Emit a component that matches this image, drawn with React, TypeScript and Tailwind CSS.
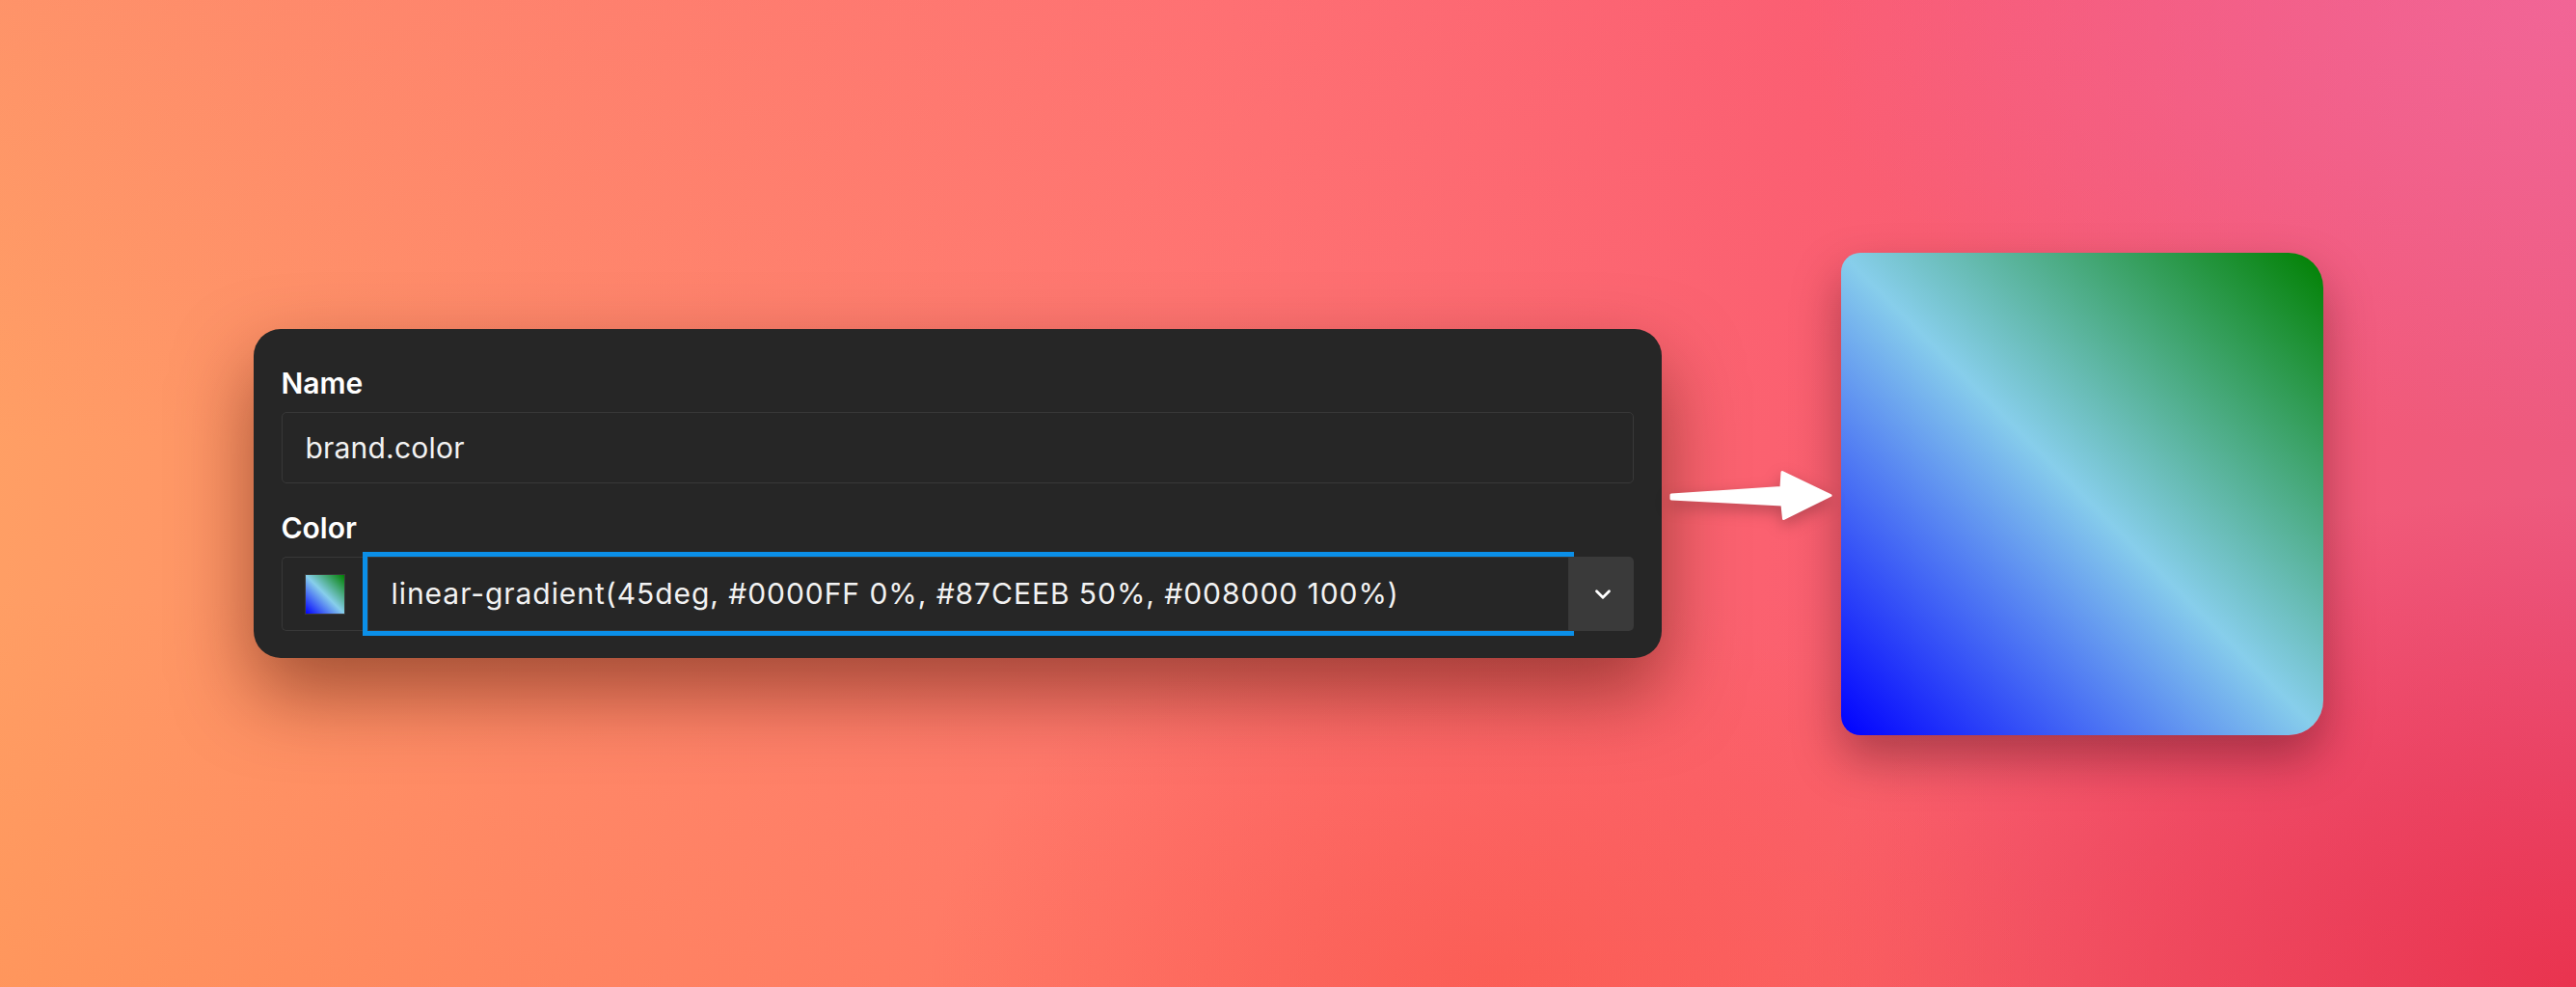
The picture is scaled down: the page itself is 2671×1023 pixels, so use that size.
import { ChevronDown } from "lucide-react"

function Arrow() {
  return (
    <svg
      width="186"
      height="65"
      viewBox="0 0 186 65"
      className="shrink-0 drop-shadow-[0_6px_8px_rgba(0,0,0,0.25)]"
    >
      <path
        d="M10 34 L124 26.5 L125 10.5 L175 34.5 L126.5 58.5 L125 44 L10 38 Z"
        fill="#ffffff"
        stroke="#ffffff"
        strokeWidth="3"
        strokeLinejoin="round"
      />
    </svg>
  )
}

function Field({ label, children }: { label: string; children: React.ReactNode }) {
  return (
    <div className="flex flex-col gap-3">
      <label className="text-[30px] leading-[36px] font-semibold text-white">{label}</label>
      {children}
    </div>
  )
}

export default function App() {
  return (
    <div className="w-full h-[1023px] flex items-center justify-center font-['Inter','Liberation_Sans',sans-serif] bg-[linear-gradient(180deg,rgba(250,80,130,0.16)_0%,rgba(250,80,130,0)_45%,rgba(255,110,40,0)_60%,rgba(255,110,40,0.14)_100%),radial-gradient(ellipse_22%_40%_at_58%_100%,rgba(250,85,85,0.7)_0%,rgba(250,85,85,0)_100%),radial-gradient(ellipse_30%_45%_at_100%_0%,#f0699a_0%,transparent_100%),radial-gradient(ellipse_30%_50%_at_100%_100%,#e62a55_0%,transparent_100%),linear-gradient(95deg,#ffa064_0%,#ff8a6a_22%,#ff7770_45%,#fb6170_68%,#f45a74_85%,#ec5a80_100%)]">
      <div className="w-[1460px] shrink-0 rounded-[28px] bg-[#262626] pt-[38px] pb-[28px] px-[29px] flex flex-col gap-[28px] shadow-[0_36px_80px_rgba(70,15,0,0.5)]">
        <Field label="Name">
          <div className="h-[74px] rounded-[5px] border border-[#383838] flex items-center px-6 text-[30px] tracking-[0.2px] text-[#f2f2f2]">
            brand.color
          </div>
        </Field>
        <Field label="Color">
          <div className="flex h-[77px]">
            <div className="w-[89px] shrink-0 border border-r-0 border-[#383838] rounded-l-[5px] flex items-center justify-center">
              <div className="w-[42px] h-[42px] border border-[#3a3a3a] bg-[linear-gradient(45deg,#0000FF_0%,#87CEEB_50%,#008000_100%)]" />
            </div>
            <div className="flex-1 border border-[#383838] outline-[5px] outline-solid outline-[#0b8fe8] flex items-center px-6 text-[30px] tracking-[0.95px] text-[#f2f2f2] whitespace-nowrap">
              linear-gradient(45deg, #0000FF 0%, #87CEEB 50%, #008000 100%)
            </div>
            <div className="w-[67px] shrink-0 bg-[#3a3a3a] rounded-r-[5px] flex items-center justify-center pl-[4px]">
              <ChevronDown size={26} strokeWidth={2.6} color="#ffffff" />
            </div>
          </div>
        </Field>
      </div>
      <Arrow />
      <div className="w-[500px] h-[500px] shrink-0 rounded-l-[20px] rounded-r-[36px] bg-[linear-gradient(45deg,#0000FF_0%,#87CEEB_50%,#008000_100%)] shadow-[0_24px_50px_rgba(60,10,20,0.4)]" />
    </div>
  )
}
